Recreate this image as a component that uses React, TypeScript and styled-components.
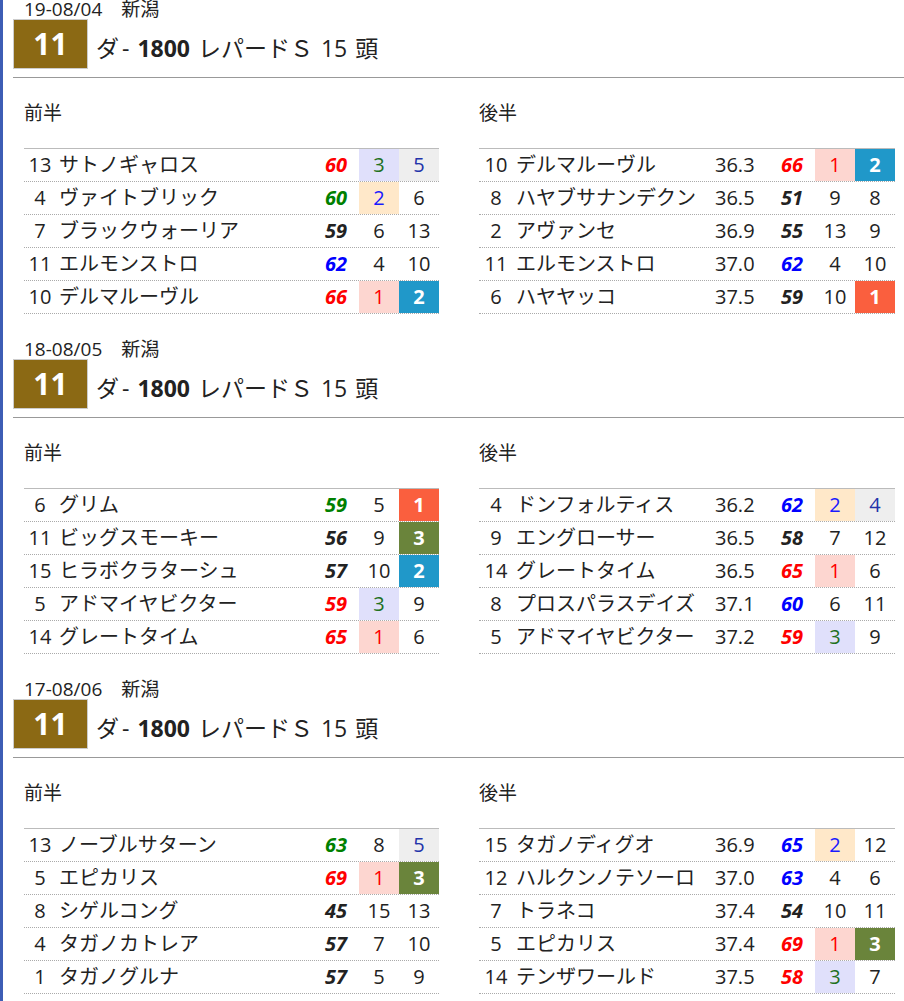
import { createGlobalStyle, styled } from "styled-components";

type Tone = "r" | "g" | "b" | "k";

type Horse = {
  no: number;
  name: string;
  time?: string;
  idx: number;
  tone: Tone;
  r1: number;
  r2: number;
};

type Race = {
  date: string;
  first: Horse[];
  second: Horse[];
};

const h = (
  no: number,
  name: string,
  idx: number,
  tone: Tone,
  r1: number,
  r2: number,
  time?: string
): Horse => ({ no, name, idx, tone, r1, r2, time });

const RACES: Race[] = [
  {
    date: "19-08/04",
    first: [
      h(13, "サトノギャロス", 60, "r", 3, 5),
      h(4, "ヴァイトブリック", 60, "g", 2, 6),
      h(7, "ブラックウォーリア", 59, "k", 6, 13),
      h(11, "エルモンストロ", 62, "b", 4, 10),
      h(10, "デルマルーヴル", 66, "r", 1, 2),
    ],
    second: [
      h(10, "デルマルーヴル", 66, "r", 1, 2, "36.3"),
      h(8, "ハヤブサナンデクン", 51, "k", 9, 8, "36.5"),
      h(2, "アヴァンセ", 55, "k", 13, 9, "36.9"),
      h(11, "エルモンストロ", 62, "b", 4, 10, "37.0"),
      h(6, "ハヤヤッコ", 59, "k", 10, 1, "37.5"),
    ],
  },
  {
    date: "18-08/05",
    first: [
      h(6, "グリム", 59, "g", 5, 1),
      h(11, "ビッグスモーキー", 56, "k", 9, 3),
      h(15, "ヒラボクラターシュ", 57, "k", 10, 2),
      h(5, "アドマイヤビクター", 59, "r", 3, 9),
      h(14, "グレートタイム", 65, "r", 1, 6),
    ],
    second: [
      h(4, "ドンフォルティス", 62, "b", 2, 4, "36.2"),
      h(9, "エングローサー", 58, "k", 7, 12, "36.5"),
      h(14, "グレートタイム", 65, "r", 1, 6, "36.5"),
      h(8, "プロスパラスデイズ", 60, "b", 6, 11, "37.1"),
      h(5, "アドマイヤビクター", 59, "r", 3, 9, "37.2"),
    ],
  },
  {
    date: "17-08/06",
    first: [
      h(13, "ノーブルサターン", 63, "g", 8, 5),
      h(5, "エピカリス", 69, "r", 1, 3),
      h(8, "シゲルコング", 45, "k", 15, 13),
      h(4, "タガノカトレア", 57, "k", 7, 10),
      h(1, "タガノグルナ", 57, "k", 5, 9),
    ],
    second: [
      h(15, "タガノディグオ", 65, "b", 2, 12, "36.9"),
      h(12, "ハルクンノテソーロ", 63, "b", 4, 6, "37.0"),
      h(7, "トラネコ", 54, "k", 10, 11, "37.4"),
      h(5, "エピカリス", 69, "r", 1, 3, "37.4"),
      h(14, "テンザワールド", 58, "r", 3, 7, "37.5"),
    ],
  },
];

const TONES: Record<Tone, string> = {
  r: "#ff0000",
  g: "#008000",
  b: "#0000ff",
  k: "#222222",
};

// first rank column: pale cells for 1-3
const PALE: Record<number, { bg: string; fg: string }> = {
  1: { bg: "#fdd6d0", fg: "#ff0000" },
  2: { bg: "#ffe8c9", fg: "#1a1aff" },
  3: { bg: "#e0e0fb", fg: "#207020" },
};

// second rank column: solid for 1-3, grey for 4-5
const SOLID: Record<number, { bg: string; fg: string; bold?: boolean }> = {
  1: { bg: "#fa5f3e", fg: "#ffffff", bold: true },
  2: { bg: "#2098c9", fg: "#ffffff", bold: true },
  3: { bg: "#6a843b", fg: "#ffffff", bold: true },
  4: { bg: "#eeeeee", fg: "#2233aa" },
  5: { bg: "#eeeeee", fg: "#2233aa" },
};

const GlobalStyle = createGlobalStyle`
  body {
    margin: 0;
    background: #fff;
    color: #222;
    font-family: "Open Sans", "Noto Sans CJK JP", sans-serif;
  }
`;

const RaceTable = ({ rows, withTime }: { rows: Horse[]; withTime?: boolean }) => (
  <St.Table>
    {rows.map((r, i) => {
      const p = PALE[r.r1];
      const s = SOLID[r.r2];
      return (
        <St.Row key={i} $withTime={withTime}>
          <St.No>{r.no}</St.No>
          <St.Name>{r.name}</St.Name>
          {withTime && <St.Time>{r.time}</St.Time>}
          <St.Index $color={TONES[r.tone]}>{r.idx}</St.Index>
          <St.Rank $bg={p?.bg} $fg={p?.fg}>
            {r.r1}
          </St.Rank>
          <St.Rank $bg={s?.bg} $fg={s?.fg} $bold={s?.bold}>
            {r.r2}
          </St.Rank>
        </St.Row>
      );
    })}
  </St.Table>
);

const App = () => {
  return (
    <St.Page>
      <GlobalStyle />
      {RACES.map((race) => (
        <St.Section key={race.date}>
          <St.DateLine>
            {race.date}　新潟
          </St.DateLine>
          <St.Header>
            <St.Badge>11</St.Badge>
            <St.Title>
              ダ<St.Dash>-</St.Dash> <b>1800</b> レパードＳ 15 頭
            </St.Title>
          </St.Header>
          <St.Divider />
          <St.Halves>
            <div>
              <St.HalfLabel>前半</St.HalfLabel>
              <RaceTable rows={race.first} />
            </div>
            <div>
              <St.HalfLabel>後半</St.HalfLabel>
              <RaceTable rows={race.second} withTime />
            </div>
          </St.Halves>
        </St.Section>
      ))}
    </St.Page>
  );
};

export default App;

const St = {
  Page: styled.main`
    min-height: 1001px;
    border-left: 3px solid #3d5db5;
    box-sizing: border-box;
  `,
  Section: styled.section`
    padding: 0 0 26px 10px;
  `,
  DateLine: styled.div`
    height: 19px;
    line-height: 19px;
    padding-left: 11px;
    font-size: 19px;
    white-space: pre;
  `,
  Header: styled.div`
    display: flex;
    align-items: center;
    gap: 8px;
    height: 50px;
  `,
  Badge: styled.div`
    width: 75px;
    height: 50px;
    box-sizing: border-box;
    border: 1px solid #cccccc;
    background: #8b6914;
    color: #fff;
    font-size: 30px;
    font-weight: 700;
    display: flex;
    align-items: center;
    justify-content: center;
    padding-bottom: 2px;
  `,
  Title: styled.div`
    font-size: 23px;
    word-spacing: 2px;
    padding-top: 6px;
    white-space: nowrap;

    & > b {
      font-weight: 700;
    }
  `,
  Dash: styled.span`
    margin-left: 3px;
  `,
  Divider: styled.hr`
    margin: 8px 0 0;
    border: 0;
    height: 1px;
    background: #999999;
  `,
  Halves: styled.div`
    display: grid;
    grid-template-columns: 415px 416px;
    gap: 40px;
    padding-left: 11px;
  `,
  HalfLabel: styled.div`
    margin: 23px 0 23px;
    height: 24px;
    line-height: 24px;
    font-size: 19px;
  `,
  Table: styled.div`
    border-top: 1px solid #bbbbbb;
  `,
  Row: styled.div<{ $withTime?: boolean }>`
    display: grid;
    grid-template-columns: ${({ $withTime }) =>
      $withTime ? "34px 1fr 50px 50px 40px 40px" : "32px 1fr 56px 40px 40px"};
    height: 32px;
    border-bottom: 1px dotted #aaaaaa;
    font-size: 20px;
    line-height: 32px;
    white-space: nowrap;
  `,
  No: styled.div`
    text-align: center;
  `,
  Name: styled.div`
    padding-left: 3px;
    overflow: hidden;
  `,
  Time: styled.div`
    text-align: right;
    padding-right: 12px;
  `,
  Index: styled.div<{ $color: string }>`
    text-align: right;
    padding-right: 12px;
    font-weight: 700;
    font-style: italic;
    color: ${({ $color }) => $color};
  `,
  Rank: styled.div<{ $bg?: string; $fg?: string; $bold?: boolean }>`
    text-align: center;
    background: ${({ $bg }) => $bg ?? "transparent"};
    color: ${({ $fg }) => $fg ?? "#222"};
    font-weight: ${({ $bold }) => ($bold ? 700 : 400)};
  `,
};
